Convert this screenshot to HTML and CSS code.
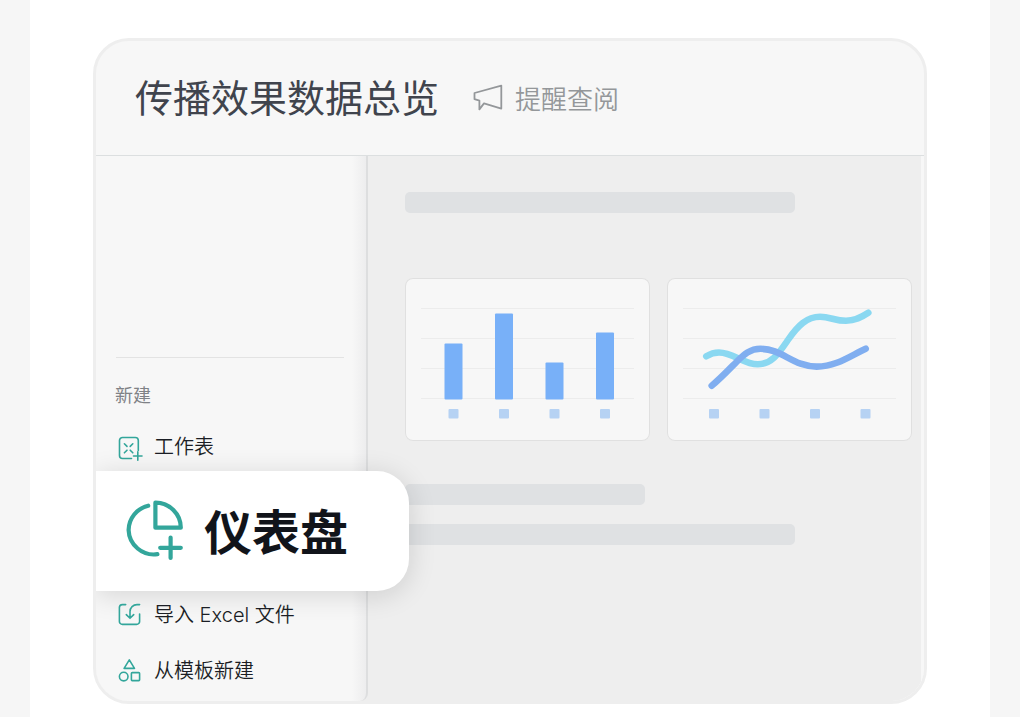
FILE: index.html
```html
<!DOCTYPE html>
<html lang="zh-CN">
<head>
  <meta charset="UTF-8" />
  <meta name="viewport" content="width=device-width, initial-scale=1.0" />
  <title>传播效果数据总览</title>
  <link rel="stylesheet" href="styles.css">
</head>
<body>
  <div class="page">
    <div class="window">
      <header class="header">
        <h1>传播效果数据总览</h1>
        <button type="button" class="remind">
          <svg width="30" height="28" viewBox="0 0 30 28" fill="none" stroke="currentColor" stroke-width="1.8" stroke-linejoin="round">
            <path d="M1.5 9 L28.3 1.6 V24.6 L11 19.4 L6.4 25.4 V16.6 L1.5 15.2 Z" />
          </svg>
          <span>提醒查阅</span>
        </button>
      </header>

      <div class="body">
        <nav class="sidebar">
          <hr class="divider">
          <h2>新建</h2>
          <ul class="menu">
            <li>
              <a href="#" class="menu-item">
                <svg class="icon" width="28" height="28" viewBox="0 0 28 28">
                  <path d="M21.3 17.5 V7.5 A3 3 0 0 0 18.3 4.5 H5.5 A3 3 0 0 0 2.5 7.5 V22.5 A3 3 0 0 0 5.5 25.5 H14.5" />
                  <path d="M16.5 23 H25 M20.8 18.7 V27.2" />
                  <path d="M7.4 10.8 L10 13.4 M15.8 10.8 L13.2 13.4 M7.4 19.8 L10 17.2 M15.8 19.8 L13.2 17.2" />
                </svg>
                <span>工作表</span>
              </a>
            </li>
            <li>
              <a href="#" class="menu-item active">
                <svg class="icon" width="64" height="64" viewBox="0 0 64 64">
                  <path d="M25.2 6.7 A25.3 25.3 0 0 0 5.6 31 A25.3 25.3 0 0 0 34.4 55.2" />
                  <path d="M32.4 3.7 A25.4 25 0 0 1 57.8 28.7 H32.4 Z" />
                  <path d="M37.2 48.8 H57.8 M47.6 38.5 V59" />
                </svg>
                <span>仪表盘</span>
              </a>
            </li>
            <li>
              <a href="#" class="menu-item">
                <svg class="icon" width="28" height="28" viewBox="0 0 28 28">
                  <path d="M8.7 3.6 H5.4 A3 3 0 0 0 2.4 6.6 V20.4 A3 3 0 0 0 5.4 23.4 H19.6 A3 3 0 0 0 22.6 20.4 V13" />
                  <path d="M22.6 3.6 H20 A7 7 0 0 0 13 10.6 V17.2 M9.3 13.6 L13 17.3 L16.7 13.6" />
                </svg>
                <span>导入 Excel 文件</span>
              </a>
            </li>
            <li>
              <a href="#" class="menu-item">
                <svg class="icon" width="28" height="28" viewBox="0 0 28 28">
                  <path d="M12.3 2.9 L17.5 11.4 H7.1 Z" />
                  <circle cx="6.7" cy="19.6" r="4.3" />
                  <rect x="14.4" y="15.6" width="8.2" height="8" rx="0.8" />
                </svg>
                <span>从模板新建</span>
              </a>
            </li>
          </ul>
        </nav>

        <main class="content">
          <div class="line long"></div>
          <div class="charts">
            <div class="card">
              <svg viewBox="0 0 245 163">
                <g class="grid">
                  <path d="M16 30.5 H229 M16 60.5 H229 M16 90.5 H229 M16 120.5 H229" />
                </g>
                <g class="bars">
                  <rect x="39.5" y="65.5" width="18" height="56" rx="1" />
                  <rect x="90" y="35.5" width="18" height="86" rx="1" />
                  <rect x="140.5" y="84.5" width="18" height="37" rx="1" />
                  <rect x="191" y="54.5" width="18" height="67" rx="1" />
                </g>
                <g class="ticks">
                  <rect x="43.5" y="131" width="10" height="9.6" rx="1" />
                  <rect x="94" y="131" width="10" height="9.6" rx="1" />
                  <rect x="144.5" y="131" width="10" height="9.6" rx="1" />
                  <rect x="195" y="131" width="10" height="9.6" rx="1" />
                </g>
              </svg>
            </div>
            <div class="card">
              <svg viewBox="0 0 245 163">
                <g class="grid">
                  <path d="M16 30.5 H229 M16 60.5 H229 M16 90.5 H229 M16 120.5 H229" />
                </g>
                <path class="curve cyan" d="M39.3 78.3 C43 76 47 74.5 52 74.5 C66 74.5 77 86.3 90.7 86.3 C105 86.3 112 75 121.3 61.5 C131 47.5 140 38.8 153 38.8 C163 38.8 168 42.8 179 42.8 C188 42.8 194 39.5 201.3 34.7" />
                <path class="curve blue" d="M44.7 107.7 C53 101 61.5 92 69.7 83.7 C77 76.5 83 70.8 93.5 70.8 C115 70.8 126 88.6 149.7 88.6 C169 88.6 183 78 198.7 70.7" />
                <g class="ticks">
                  <rect x="42" y="131" width="10" height="9.6" rx="1" />
                  <rect x="92.5" y="131" width="10" height="9.6" rx="1" />
                  <rect x="143" y="131" width="10" height="9.6" rx="1" />
                  <rect x="193.5" y="131" width="10" height="9.6" rx="1" />
                </g>
              </svg>
            </div>
          </div>
          <div class="line short"></div>
          <div class="line long"></div>
        </main>
      </div>
    </div>
  </div>
</body>
</html>
```

FILE: styles.css
```css
* {
  margin: 0;
  padding: 0;
  box-sizing: border-box;
}

body {
  font-family: Inter, "Noto Sans CJK SC", sans-serif;
  background-color: #f6f6f6;
  color: #11141a;
  padding: 0 30px;
}

.page {
  min-height: 100vh;
  background-color: #fff;
  padding: 38px 63px 13px;
}

.window {
  background-color: #f7f7f7;
  border: 3px solid #eee;
  border-radius: 36px;
  overflow: hidden;
}

.header {
  display: flex;
  align-items: center;
  gap: 34px;
  height: 115px;
  padding-left: 39px;
  border-bottom: 1px solid #dcdfe0;
}

h1 {
  font-size: 38px;
  line-height: 56px;
  font-weight: 400;
  color: #40444d;
}

.remind {
  display: flex;
  align-items: center;
  gap: 12px;
  border: none;
  background: none;
  font-family: inherit;
  font-size: 26px;
  font-weight: 350;
  line-height: 38px;
  color: #94979a;
  cursor: pointer;
}

.remind span {
  padding-top: 4px;
}

.body {
  display: flex;
  padding-right: 3px;
  background: linear-gradient(to right, #eee 50%, #f7f7f7 50%);
}

.sidebar {
  position: relative;
  z-index: 1;
  flex: none;
  width: 272px;
  padding: 201px 0 6px;
  border-right: 2px solid #dddedf;
  border-bottom-right-radius: 8px;
  background: linear-gradient(to left, #ededee, #f7f7f7 14px);
}

.divider {
  border: none;
  height: 1px;
  margin: 0 22px 0 20px;
  background-color: #e3e3e3;
}

h2 {
  margin: 24px 0 13px;
  padding-left: 19px;
  font-size: 18px;
  line-height: 28px;
  font-weight: 400;
  color: #7f8286;
}

.menu {
  display: flex;
  flex-direction: column;
  gap: 8px;
  list-style: none;
}

.menu-item {
  display: flex;
  align-items: center;
  gap: 9px;
  height: 48px;
  padding-left: 21px;
  font-size: 20px;
  font-weight: 350;
  color: #1b1e25;
  text-decoration: none;
}

.menu-item span {
  padding-bottom: 3px;
}

.icon {
  flex: none;
  fill: none;
  stroke: #33a69b;
  stroke-width: 1.6;
  stroke-linecap: round;
  stroke-linejoin: round;
}

/* the picked item grows out over the content pane */
.menu-item.active {
  gap: 17px;
  width: calc(100% + 43px);
  height: 120px;
  margin: -8px 0;
  padding-left: 27px;
  border-radius: 0 32px 32px 0;
  background-color: #fff;
  box-shadow: 0 4px 28px rgba(0, 0, 0, 0.14);
  font-size: 48px;
  font-weight: bold;
  color: #11141a;
}

.active .icon {
  stroke-width: 4.2;
}

.menu-item.active span {
  padding-bottom: 4px;
}

.content {
  flex: 1;
  padding: 36px 9px 36px 37px;
  background-color: #eee;
}

.line {
  height: 21px;
  border-radius: 5px;
  background-color: #dfe1e3;
}

.long {
  width: 77%;
}

.short {
  width: 240px;
  margin-bottom: 19px;
}

.charts {
  display: grid;
  grid-template-columns: 1fr 1fr;
  gap: 17px;
  margin: 65px 0 43px;
}

.card {
  border-radius: 8px;
  background-color: #f7f7f7;
  box-shadow: inset 0 0 0 1px #e0e0e0;
}

.card svg {
  display: block;
  width: 100%;
}

.grid {
  stroke: #ececec;
}

.bars {
  fill: #78b0f8;
}

.ticks {
  fill: #b6d2f3;
}

.curve {
  fill: none;
  stroke-width: 6.6;
  stroke-linecap: round;
}

.cyan {
  stroke: #8ad8f1;
}

.blue {
  stroke: #80aef0;
}
```
